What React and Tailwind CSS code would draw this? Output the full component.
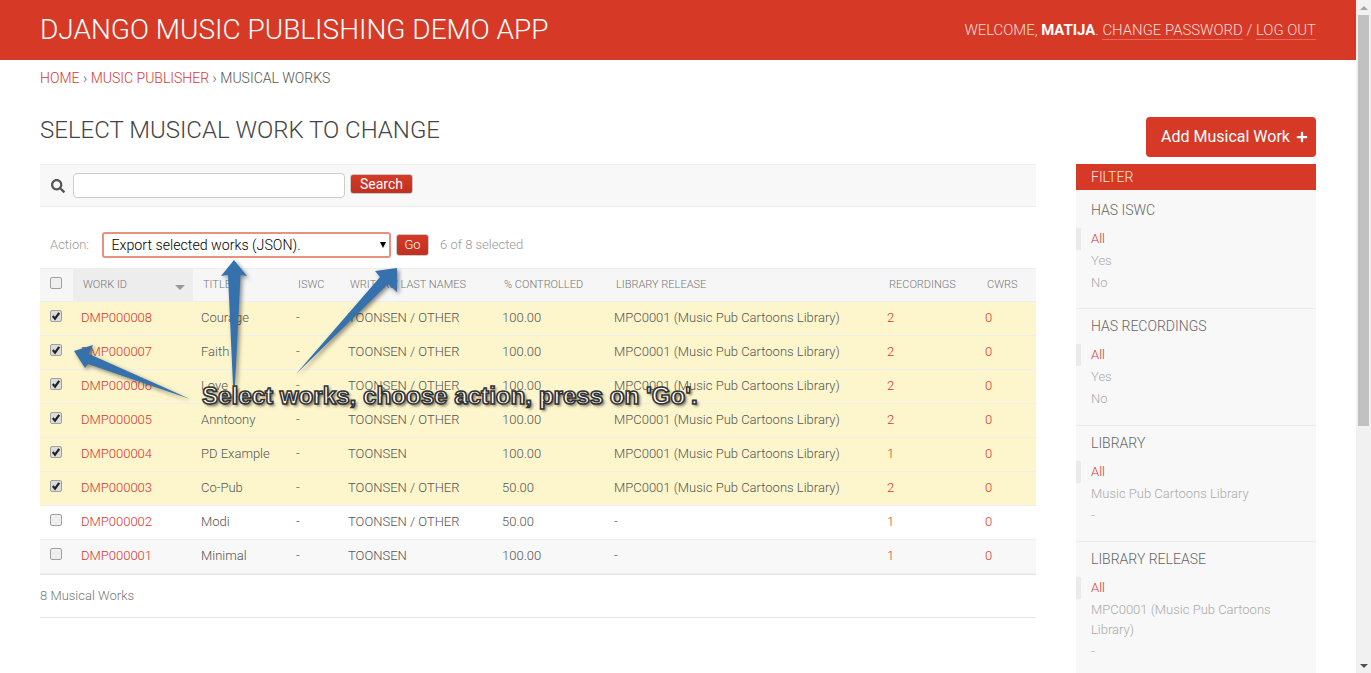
import { FaSearch, FaPlus } from "react-icons/fa";

const works = [
    { id: "DMP000008", title: "Courage", writers: "TOONSEN / OTHER", ctrl: "100.00", release: "MPC0001 (Music Pub Cartoons Library)", rec: 2, on: true },
    { id: "DMP000007", title: "Faith", writers: "TOONSEN / OTHER", ctrl: "100.00", release: "MPC0001 (Music Pub Cartoons Library)", rec: 2, on: true },
    { id: "DMP000006", title: "Love", writers: "TOONSEN / OTHER", ctrl: "100.00", release: "MPC0001 (Music Pub Cartoons Library)", rec: 2, on: true },
    { id: "DMP000005", title: "Anntoony", writers: "TOONSEN / OTHER", ctrl: "100.00", release: "MPC0001 (Music Pub Cartoons Library)", rec: 2, on: true },
    { id: "DMP000004", title: "PD Example", writers: "TOONSEN", ctrl: "100.00", release: "MPC0001 (Music Pub Cartoons Library)", rec: 1, on: true },
    { id: "DMP000003", title: "Co-Pub", writers: "TOONSEN / OTHER", ctrl: "50.00", release: "MPC0001 (Music Pub Cartoons Library)", rec: 2, on: true },
    { id: "DMP000002", title: "Modi", writers: "TOONSEN / OTHER", ctrl: "50.00", release: "-", rec: 1, on: false },
    { id: "DMP000001", title: "Minimal", writers: "TOONSEN", ctrl: "100.00", release: "-", rec: 1, on: false },
];

const filters = [
    { title: "HAS ISWC", items: ["Yes", "No"] },
    { title: "HAS RECORDINGS", items: ["Yes", "No"] },
    { title: "LIBRARY", items: ["Music Pub Cartoons Library", "-"] },
    { title: "LIBRARY RELEASE", items: ["MPC0001 (Music Pub Cartoons Library)", "-"] },
];

function Checkbox({ checked }) {
    return (
        <span className={"flex h-3 w-3 items-center justify-center rounded-[2px] border border-[#a0a0a0] " + (checked ? "bg-[#dcdcdc]" : "bg-[#efefef]")}>
            {checked && (
                <svg width="10" height="10" viewBox="0 0 10 10">
                    <path d="M1.8 5 L4 7.6 L8.2 1.8" fill="none" stroke="#222" strokeWidth="2.2" />
                </svg>
            )}
        </span>
    );
}

function Arrows() {
    return (
        <svg className="pointer-events-none absolute left-0 top-0 drop-shadow-[2px_2px_2px_rgba(0,0,0,0.45)]" width="1356" height="673">
            <polygon fill="#3571ad" points="234,260 247,276 240.5,275 235,385 233,385 228,275 221,276" />
            <polygon fill="#3571ad" points="397,268 397,292 388,284 296,374 380,277 375,271" />
            <polygon fill="#3571ad" points="74,351 93,345 89,354 190,399 88,364 85,368" />
        </svg>
    );
}

export default function App() {
    return (
        <div className="flex h-[673px] w-full overflow-hidden bg-white font-['Roboto',sans-serif] text-[14px] text-[#666]">
            <div className="relative min-w-0 flex-1">
                <header className="flex h-[60px] items-center justify-between bg-[#d63a26] px-10 text-white">
                    <h1 className="text-[28px] font-light">DJANGO MUSIC PUBLISHING DEMO APP</h1>
                    <div className="text-[14.9px] font-light text-[#f7dcd8]">
                        WELCOME, <strong className="font-bold text-white">MATIJA</strong>.{" "}
                        <a className="border-b border-[#e8685a]">CHANGE PASSWORD</a> /{" "}
                        <a className="border-b border-[#e8685a]">LOG OUT</a>
                    </div>
                </header>

                <nav className="flex h-9 items-center px-10 text-[14px] font-light text-[#555]">
                    <span className="text-[#d8362f]">HOME</span>
                    <span className="mx-[3.5px]">›</span>
                    <span className="text-[#d8362f]">MUSIC PUBLISHER</span>
                    <span className="mx-[3.5px]">›</span>
                    <span>MUSICAL WORKS</span>
                </nav>

                <div className="flex gap-10 px-10">
                    <div className="w-[996px] shrink-0">
                        <h2 className="flex h-[68px] items-center text-[24px] font-light text-[#444]">SELECT MUSICAL WORK TO CHANGE</h2>

                        <div className="flex h-[43px] items-center gap-[5px] border-y border-[#eee] bg-[#f8f8f8] pl-[11px]">
                            <FaSearch className="mr-[3px] text-[14px] text-[#555]" />
                            <input className="h-[25px] w-[272px] rounded-[4px] border border-[#ccc] bg-white" />
                            <button className="mb-1 h-5 w-[63px] rounded-[3px] border border-[#c9c9c9] bg-gradient-to-b from-[#d63a26] to-[#c03020] text-[14px] leading-none text-white">Search</button>
                        </div>

                        <div className="flex h-[61px] items-center pl-[10px] pt-[15px] text-[13px] font-light text-[#999]">
                            <span className="w-[52px]">Action:</span>
                            <div className="relative">
                                <select className="block h-[26px] w-[289px] appearance-none rounded-[3px] border-2 border-[#e8917f] bg-white pl-[7.5px] pt-px text-[14.2px] text-black outline-none">
                                    <option>Export selected works (JSON).</option>
                                </select>
                                <span className="absolute right-[5px] top-[10px] h-0 w-0 border-x-[3.5px] border-t-[6px] border-x-transparent border-t-black" />
                            </div>
                            <button className="ml-[5px] h-[22px] w-[33px] rounded-[3px] border border-[#ccc] bg-gradient-to-b from-[#d63a26] to-[#c03020] text-[13px] text-white">Go</button>
                            <span className="ml-[11px]">6 of 8 selected</span>
                        </div>

                        <table className="w-full table-fixed border-collapse text-[13px] font-light text-[#555]">
                            <colgroup>
                                <col className="w-[33px]" />
                                <col className="w-[120px]" />
                                <col className="w-[95px]" />
                                <col className="w-[52px]" />
                                <col className="w-[154px]" />
                                <col className="w-[112px]" />
                                <col className="w-[273px]" />
                                <col className="w-[98px]" />
                                <col className="w-[59px]" />
                            </colgroup>
                            <thead>
                                <tr className="h-[33px] border-y border-[#eee] bg-[#f6f6f6] text-left text-[11px] text-[#777]">
                                    <th className="pb-[5px] pl-[10px] font-light"><Checkbox /></th>
                                    <th className="bg-[#ededed] pl-[10px] font-light">
                                        <div className="flex items-center justify-between pr-2">
                                            WORK ID
                                            <span className="mt-[5px] h-0 w-0 border-x-[5px] border-t-[5px] border-x-transparent border-t-[#999]" />
                                        </div>
                                    </th>
                                    <th className="pl-[10px] font-light">TITLE</th>
                                    <th className="pl-[10px] font-light">ISWC</th>
                                    <th className="pl-[10px] font-light">WRITERS' LAST NAMES</th>
                                    <th className="pl-[10px] font-light">% CONTROLLED</th>
                                    <th className="pl-[10px] font-light">LIBRARY RELEASE</th>
                                    <th className="pl-[10px] font-light">RECORDINGS</th>
                                    <th className="pl-[10px] font-light">CWRS</th>
                                </tr>
                            </thead>
                            <tbody>
                                {works.map((w, i) => (
                                    <tr key={w.id} className={"h-[34px] border-b border-[#eeeeee] " + (w.on ? "bg-[#fdf5cb]" : i === 7 ? "bg-[#f8f8f8]" : "bg-white")}>
                                        <td className="pb-[5px] pl-[10px]"><Checkbox checked={w.on} /></td>
                                        <td className="pb-px pl-2 text-[#d8362f]">{w.id}</td>
                                        <td className="pb-px pl-2">{w.title}</td>
                                        <td className="pb-px pl-2">-</td>
                                        <td className="pb-px pl-2">{w.writers}</td>
                                        <td className="pb-px pl-2">{w.ctrl}</td>
                                        <td className="pb-px pl-2">{w.release}</td>
                                        <td className="pb-px pl-2 text-[#d8362f]">{w.rec}</td>
                                        <td className="pb-px pl-2 text-[#d8362f]">0</td>
                                    </tr>
                                ))}
                            </tbody>
                        </table>

                        <div className="flex h-[44px] items-center border-t border-b border-[#e5e5e5] text-[13px] font-light text-[#777]">8 Musical Works</div>
                    </div>

                    <aside className="w-[240px] shrink-0">
                        <div className="flex h-[68px] items-start justify-end pt-[21px]">
                            <button className="flex h-10 w-[170px] items-center justify-between rounded-[4px] bg-[#d63a26] pl-[15px] pr-2 text-[16px] text-white">
                                Add Musical Work <FaPlus className="text-[12px]" />
                            </button>
                        </div>
                        <div className="flex h-[26px] items-center bg-[#d63a26] pl-[15px] text-[14px] font-light text-[#fbe3df]">FILTER</div>
                        <div className="bg-[#f8f8f8] pt-[3px]">
                            {filters.map((f) => (
                                <div key={f.title} className="border-b border-[#eaeaea] pb-[14.3px] pt-[7px]">
                                    <h3 className="pl-[15px] text-[14px] font-light leading-[20px] text-[#666]">{f.title}</h3>
                                    <ul className="mt-[8px] text-[13px] font-light leading-[20px] text-[#aaa]">
                                        <li className="border-l-[5px] border-[#eaeaea] py-[1px] pl-[10px] text-[#d8362f]">All</li>
                                        {f.items.map((it) => (
                                            <li key={it} className="py-[1px] pl-[15px] pr-[30px]">{it}</li>
                                        ))}
                                    </ul>
                                </div>
                            ))}
                        </div>
                    </aside>
                </div>

                <Arrows />
                <div className="pointer-events-none absolute left-[202px] top-[379px] whitespace-nowrap font-['Liberation_Sans',sans-serif] text-[24.15px] font-bold leading-[34px] text-white [-webkit-text-stroke:1.6px_#333] [text-shadow:2px_2px_3px_rgba(0,0,0,0.6)]">
                    Select works, choose action, press on 'Go'.
                </div>
            </div>

            <div className="flex w-[15px] shrink-0 flex-col bg-[#f1f1f1]">
                <div className="flex h-[15px] items-center justify-center">
                    <span className="h-0 w-0 border-x-[4px] border-b-[4px] border-x-transparent border-b-[#a3a3a3]" />
                </div>
                <div className="mx-[2px] h-[411px] bg-[#c1c1c1]" />
                <div className="flex-1" />
                <div className="flex h-[15px] items-center justify-center">
                    <span className="h-0 w-0 border-x-[4px] border-t-[4px] border-x-transparent border-t-[#505050]" />
                </div>
            </div>
        </div>
    );
}
